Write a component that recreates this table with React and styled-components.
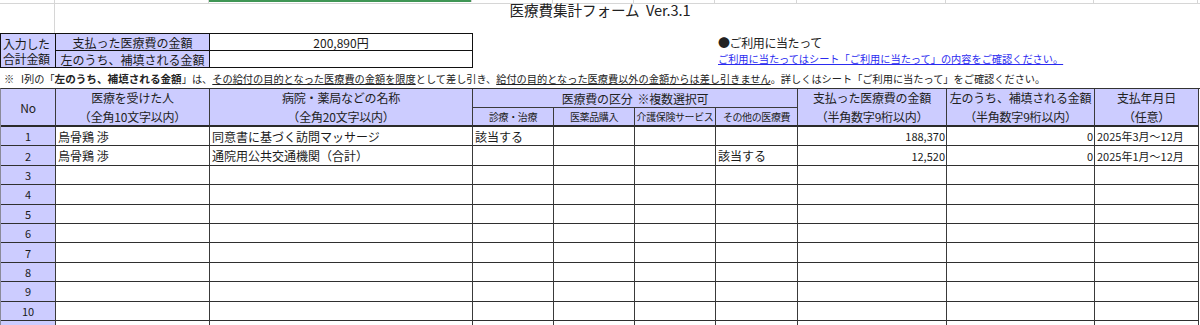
import styled, { createGlobalStyle } from 'styled-components';

const COLS = '55px 154px 263px 81px 81px 81px 82px 149px 148px 104px';

const GlobalStyle = createGlobalStyle`
  html, body {
    margin: 0;
    padding: 0;
    background: #ffffff;
    overflow: hidden;
  }
  body {
    font-family: "Noto Sans CJK JP", "Noto Sans", sans-serif;
    color: #1a1a1a;
  }
`;

const Sheet = styled.div`
  width: 1200px;
  display: flex;
  flex-direction: column;
`;

const GridStrip = styled.div`
  display: grid;
  grid-template-columns: ${COLS};
  height: 3px;
  border-bottom: 1px solid #d6d6d6;
`;

const StripCell = styled.div`
  border-right: 1px solid #d6d6d6;
  background: ${(p) => (p.$active ? '#3f9655' : 'transparent')};
  height: ${(p) => (p.$active ? '2px' : '3px')};
`;

const TitleRow = styled.div`
  display: grid;
  grid-template-columns: 55px 1fr 55px;
  height: 29px;
`;

const Gutter = styled.div`
  border-right: 1px solid #d6d6d6;
`;

const Title = styled.div`
  text-align: center;
  font-size: 14.6px;
  line-height: 12px;
  letter-spacing: -0.1px;
  color: #222;
`;

const SummaryRow = styled.div`
  display: flex;
  height: 34px;
`;

const SummaryBox = styled.div`
  display: grid;
  grid-template-columns: 55px 154px 263px;
  grid-template-rows: 17px 17px;
  border-top: 1px solid #111;
  border-left: 1px solid #111;
  box-sizing: border-box;
  height: 35px;
`;

const SumCell = styled.div`
  box-sizing: border-box;
  border-right: 1px solid #111;
  border-bottom: 1px solid #111;
  background: ${(p) => (p.$blue ? '#ccccff' : '#ffffff')};
  font-size: 12px;
  line-height: 15px;
  display: flex;
  align-items: center;
  justify-content: center;
  padding: 0 2px;
  white-space: nowrap;
  grid-row: ${(p) => p.$rows || 'auto'};
`;

const SumLabel = styled(SumCell)`
  flex-direction: column;
  align-items: flex-start;
  justify-content: center;
  letter-spacing: -0.3px;
`;

const Notice = styled.div`
  display: flex;
  flex-direction: column;
  padding-left: 245px;
  padding-top: 2px;
`;

const NoticeHead = styled.div`
  font-size: 12px;
  line-height: 16px;
  letter-spacing: -0.4px;
  color: #222;
`;

const NoticeLink = styled.a`
  font-size: 10.2px;
  line-height: 16px;
  color: #2b2bf0;
  text-decoration: underline;
  white-space: nowrap;
`;

const NoteLine = styled.div`
  height: 21px;
  font-size: 10.2px;
  line-height: 24px;
  padding-left: 4px;
  white-space: nowrap;
  color: #222;
`;

const Em = styled.b`
  font-weight: 700;
  font-size: 10.6px;
`;

const U = styled.span`
  text-decoration: underline;
`;

const Table = styled.div`
  display: grid;
  grid-template-columns: ${COLS};
  grid-template-rows: 19px 19px;
  grid-auto-rows: 19.4px;
  border-top: 1px solid #333;
  border-left: 1px solid #8a8a9a;
`;

const HeadCell = styled.div`
  box-sizing: border-box;
  background: #ccccff;
  border-right: 1px solid #3a3a3a;
  border-bottom: ${(p) => (p.$thin ? '1px solid #3a3a3a' : '2px solid #2a2a2a')};
  grid-column: ${(p) => p.$col};
  grid-row: ${(p) => p.$row};
  display: flex;
  flex-direction: column;
  align-items: center;
  justify-content: center;
  font-size: ${(p) => (p.$small ? '10px' : '12px')};
  line-height: 19px;
  letter-spacing: ${(p) => (p.$small ? '-0.4px' : '-0.2px')};
  white-space: nowrap;
  overflow: hidden;
  color: #222;
`;

const Cell = styled.div`
  box-sizing: border-box;
  background: ${(p) => (p.$blue ? '#ccccff' : '#ffffff')};
  border-right: 1px solid #3a3a3a;
  border-bottom: 1px solid #2f2f2f;
  display: flex;
  align-items: center;
  justify-content: ${(p) =>
    p.$align === 'right' ? 'flex-end' : p.$align === 'center' ? 'center' : 'flex-start'};
  padding: 0 ${(p) => (p.$align === 'right' ? '1px' : '2px')};
  font-size: ${(p) => (p.$num ? '11px' : '12px')};
  white-space: nowrap;
  overflow: hidden;
  color: #1a1a1a;
`;

const rows = [
  ['烏骨鶏 渉', '同意書に基づく訪問マッサージ', '該当する', '', '', '', '188,370', '0', '2025年3月～12月'],
  ['烏骨鶏 渉', '通院用公共交通機関（合計）', '', '', '', '該当する', '12,520', '0', '2025年1月～12月'],
];

function App() {
  const body = [];
  // 10 numbered rows, then the top of the next row peeking in at the bottom
  for (let i = 0; i < 11; i++) {
    const r = rows[i] || ['', '', '', '', '', '', '', '', ''];
    body.push(
      <Cell key={`n${i}`} $blue $align="center" $num>{i < 10 ? i + 1 : ''}</Cell>,
      <Cell key={`a${i}`}>{r[0]}</Cell>,
      <Cell key={`b${i}`}>{r[1]}</Cell>,
      <Cell key={`c${i}`}>{r[2]}</Cell>,
      <Cell key={`d${i}`}>{r[3]}</Cell>,
      <Cell key={`e${i}`}>{r[4]}</Cell>,
      <Cell key={`f${i}`}>{r[5]}</Cell>,
      <Cell key={`g${i}`} $align="right" $num>{r[6]}</Cell>,
      <Cell key={`h${i}`} $align="right" $num>{r[7]}</Cell>,
      <Cell key={`k${i}`} $num>{r[8]}</Cell>
    );
  }

  return (
    <>
      <GlobalStyle />
      <Sheet>
        <GridStrip>
          <StripCell />
          <StripCell />
          <StripCell $active />
          <StripCell />
          <StripCell />
          <StripCell />
          <StripCell />
          <StripCell />
          <StripCell />
          <StripCell />
        </GridStrip>

        <TitleRow>
          <Gutter />
          <Title>医療費集計フォーム&nbsp;&nbsp;Ver.3.1</Title>
          <div />
        </TitleRow>

        <SummaryRow>
          <SummaryBox>
            <SumLabel $blue $rows="1 / span 2">
              <span>入力した</span>
              <span>合計金額</span>
            </SumLabel>
            <SumCell $blue>支払った医療費の金額</SumCell>
            <SumCell>200,890円</SumCell>
            <SumCell $blue>左のうち、補填される金額</SumCell>
            <SumCell />
          </SummaryBox>
          <Notice>
            <NoticeHead>●ご利用に当たって</NoticeHead>
            <NoticeLink href="#">ご利用に当たってはシート「ご利用に当たって」の内容をご確認ください。</NoticeLink>
          </Notice>
        </SummaryRow>

        <NoteLine>
          ※&nbsp;&nbsp;&nbsp;I列の「<Em>左のうち、補填される金額</Em>」は、
          <U>その給付の目的となった医療費の金額を限度</U>として差し引き、
          <U>給付の目的となった医療費以外の金額からは差し引きません</U>。詳しくはシート「ご利用に当たって」をご確認ください。
        </NoteLine>

        <Table>
          <HeadCell $col="1" $row="1 / span 2">No</HeadCell>
          <HeadCell $col="2" $row="1 / span 2">
            <span>医療を受けた人</span>
            <span>（全角10文字以内）</span>
          </HeadCell>
          <HeadCell $col="3" $row="1 / span 2">
            <span>病院・薬局などの名称</span>
            <span>（全角20文字以内）</span>
          </HeadCell>
          <HeadCell $col="4 / span 4" $row="1" $thin>医療費の区分&nbsp;&nbsp;※複数選択可</HeadCell>
          <HeadCell $col="8" $row="1 / span 2">
            <span>支払った医療費の金額</span>
            <span>（半角数字9桁以内）</span>
          </HeadCell>
          <HeadCell $col="9" $row="1 / span 2">
            <span>左のうち、補填される金額</span>
            <span>（半角数字9桁以内）</span>
          </HeadCell>
          <HeadCell $col="10" $row="1 / span 2">
            <span>支払年月日</span>
            <span>（任意）</span>
          </HeadCell>
          <HeadCell $col="4" $row="2" $small>診療・治療</HeadCell>
          <HeadCell $col="5" $row="2" $small>医薬品購入</HeadCell>
          <HeadCell $col="6" $row="2" $small>介護保険サービス</HeadCell>
          <HeadCell $col="7" $row="2" $small>その他の医療費</HeadCell>
          {body}
        </Table>
      </Sheet>
    </>
  );
}

export default App;
